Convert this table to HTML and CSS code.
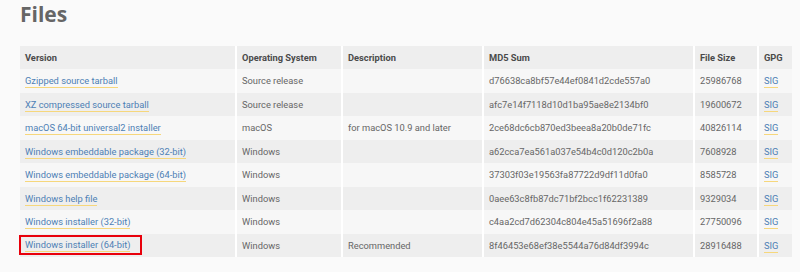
FILE: index.html
```html
<!DOCTYPE html>
<html lang="en">
<head>
    <meta charset="UTF-8">
    <title>Files</title>
    <link rel="stylesheet" href="styles.css">
</head>
<body>
    <h1 class="title">Files</h1>

    <table class="files">
        <colgroup>
            <col class="col-version">
            <col class="col-os">
            <col class="col-desc">
            <col class="col-md5">
            <col class="col-size">
            <col class="col-gpg">
        </colgroup>
        <thead>
            <tr>
                <th>Version</th>
                <th>Operating System</th>
                <th>Description</th>
                <th>MD5 Sum</th>
                <th>File Size</th>
                <th>GPG</th>
            </tr>
        </thead>
        <tbody>
            <tr>
                <td><a href="#">Gzipped source tarball</a></td>
                <td>Source release</td>
                <td></td>
                <td>d76638ca8bf57e44ef0841d2cde557a0</td>
                <td>25986768</td>
                <td><a href="#">SIG</a></td>
            </tr>
            <tr>
                <td><a href="#">XZ compressed source tarball</a></td>
                <td>Source release</td>
                <td></td>
                <td>afc7e14f7118d10d1ba95ae8e2134bf0</td>
                <td>19600672</td>
                <td><a href="#">SIG</a></td>
            </tr>
            <tr>
                <td><a href="#">macOS 64-bit universal2 installer</a></td>
                <td>macOS</td>
                <td>for macOS 10.9 and later</td>
                <td>2ce68dc6cb870ed3beea8a20b0de71fc</td>
                <td>40826114</td>
                <td><a href="#">SIG</a></td>
            </tr>
            <tr>
                <td><a href="#">Windows embeddable package (32-bit)</a></td>
                <td>Windows</td>
                <td></td>
                <td>a62cca7ea561a037e54b4c0d120c2b0a</td>
                <td>7608928</td>
                <td><a href="#">SIG</a></td>
            </tr>
            <tr>
                <td><a href="#">Windows embeddable package (64-bit)</a></td>
                <td>Windows</td>
                <td></td>
                <td>37303f03e19563fa87722d9df11d0fa0</td>
                <td>8585728</td>
                <td><a href="#">SIG</a></td>
            </tr>
            <tr>
                <td><a href="#">Windows help file</a></td>
                <td>Windows</td>
                <td></td>
                <td>0aee63c8fb87dc71bf2bcc1f62231389</td>
                <td>9329034</td>
                <td><a href="#">SIG</a></td>
            </tr>
            <tr>
                <td><a href="#">Windows installer (32-bit)</a></td>
                <td>Windows</td>
                <td></td>
                <td>c4aa2cd7d62304c804e45a51696f2a88</td>
                <td>27750096</td>
                <td><a href="#">SIG</a></td>
            </tr>
            <tr>
                <td><span class="highlight"><a href="#">Windows installer (64-bit)</a></span></td>
                <td>Windows</td>
                <td>Recommended</td>
                <td>8f46453e68ef38e5544a76d84df3994c</td>
                <td>28916488</td>
                <td><a href="#">SIG</a></td>
            </tr>
        </tbody>
    </table>
</body>
</html>
```

FILE: styles.css
```css
body {
    margin: 0;
    padding: 0 8px 0 20px;
    background-color: #fafafa;
    font-family: Roboto, "Liberation Sans", sans-serif;
    color: #666;
}

.title {
    margin: 0;
    padding-top: 1px;
    height: 46px;
    box-sizing: border-box;
    font-family: "Open Sans", sans-serif;
    font-size: 21px;
    font-weight: 700;
    line-height: 26px;
    color: #666;
}

.files {
    width: 772px;
    table-layout: fixed;
    border-collapse: collapse;
    font-size: 9.3px;
}

.col-version { width: 216px; }
.col-os { width: 106px; }
.col-desc { width: 141px; }
.col-md5 { width: 211px; }
.col-size { width: 64px; }
.col-gpg { width: 34px; }

.files th,
.files td {
    height: 23.5px;
    padding: 0 5px;
    text-align: left;
    white-space: nowrap;
    border-right: 2px solid #fff;
    box-sizing: border-box;
}

.files th:last-child,
.files td:last-child {
    border-right: 0;
}

.files th {
    height: 23px;
    font-weight: 700;
    color: #4a4a4a;
    background-color: #eeeeee;
}

.files tbody tr:nth-child(odd) td {
    background-color: #f7f7f7;
}

.files tbody tr:nth-child(even) td {
    background-color: #eeeeee;
}

.files a {
    color: #4d7fb5;
    text-decoration: none;
    border-bottom: 1px solid #f6d77c;
    padding-bottom: 1px;
}

.highlight {
    display: inline-block;
    margin-left: -6px;
    padding: 1px 10px 1px 4px;
    border: 2px solid #e8000b;
    line-height: 14px;
}
```
